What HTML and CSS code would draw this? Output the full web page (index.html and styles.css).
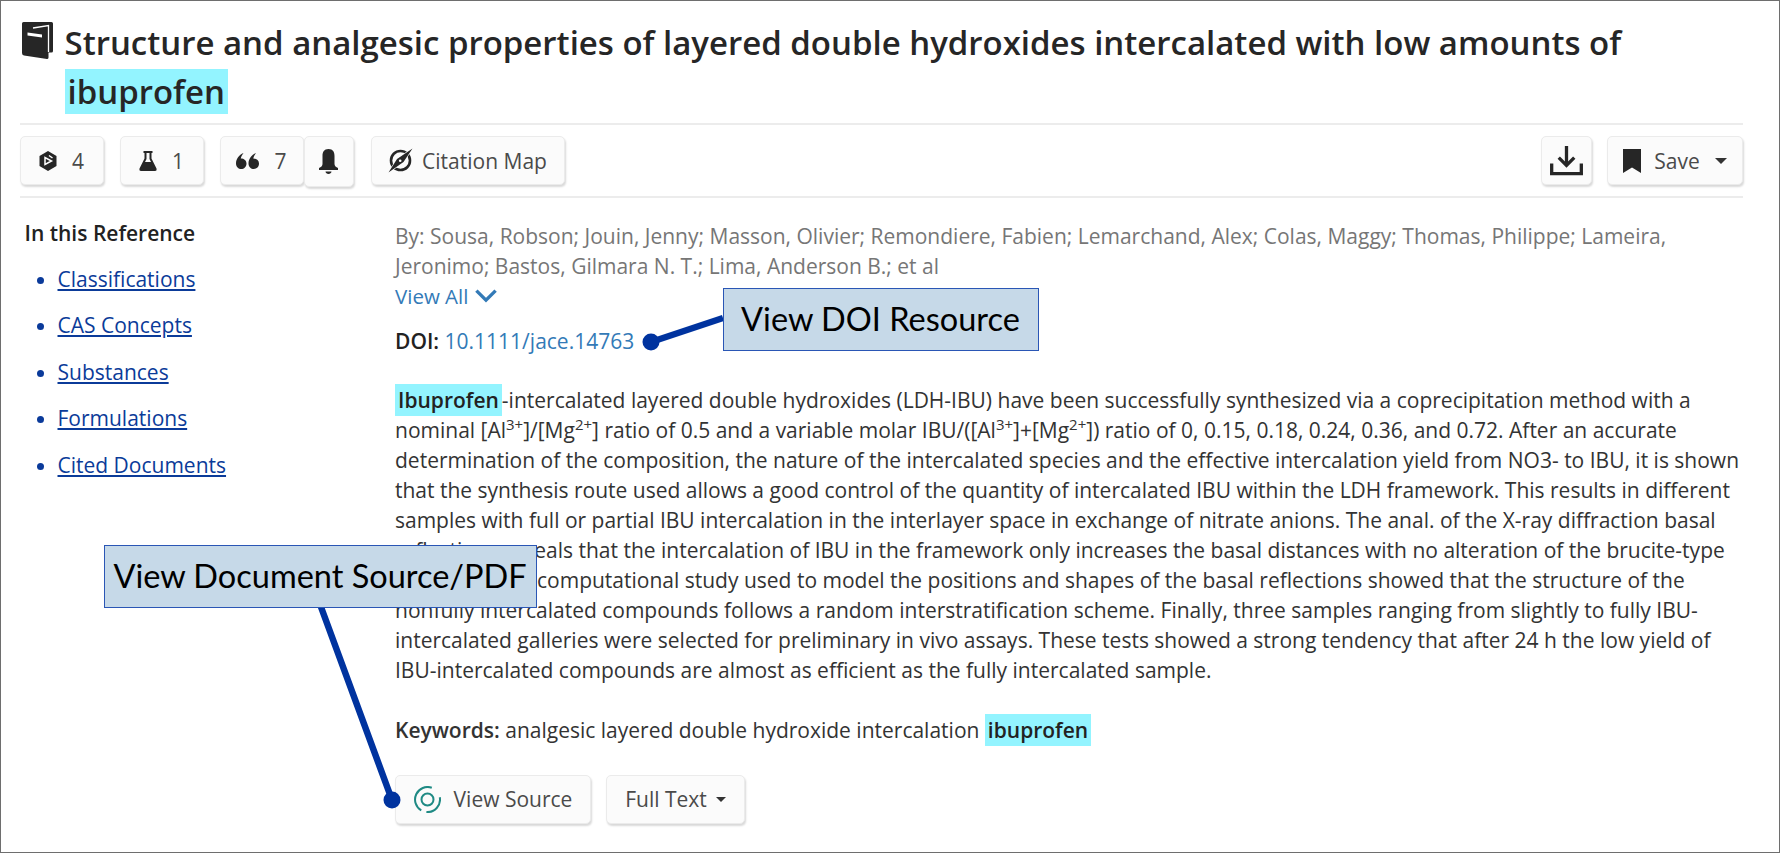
FILE: index.html
```html
<!DOCTYPE html>
<html lang="en">
<head>
<meta charset="utf-8">
<title>Reference detail</title>
<link rel="stylesheet" href="styles.css">
</head>
<body>
<div class="frame">
  <header class="title-row">
    <svg class="book" viewBox="0 0 31 37"><path d="M1.500 0 H29.500 Q31 0 31 1.500 V29 Q31 30.500 29.500 30.500 H26.500 V35.500 Q26.500 37 25 37 L2 33.500 Q0 33 0 31 V1.500 Q0 0 1.500 0 Z" fill="#262626"/><path d="M11 6 L26.500 3.500 V30" fill="none" stroke="#fff" stroke-width="1.300"/><path d="M5.500 10.500 L20 12.500 V15.500 L5.500 13.500 Z" fill="#fff"/></svg>
    <h1 class="title">Structure and analgesic properties of layered double hydroxides intercalated with low amounts of <mark class="hl hl-title">ibuprofen</mark></h1>
  </header>
  <nav class="toolbar">
    <div class="tools-left">
      <button class="btn btn-count"><svg class="ic" viewBox="0 0 18 20"><path d="M9 0 L17.500 5 V15 L9 20 L.5 15 V5 Z" fill="#262626"/><path d="M10 4.500 L13.500 7 M6 6.500 V13.500 L12.500 10 Z" fill="#262626" stroke="#fff" stroke-width="1.500"/></svg><span>4</span></button>
      <button class="btn btn-count"><svg class="ic" viewBox="0 0 18 20"><path fill-rule="evenodd" d="M4.500 0 H13.500 V2 H12.500 V7.500 L17.500 17.500 Q18 20 16 20 H2 Q0 20 .5 17.500 L5.500 7.500 V2 H4.500 Z M7.500 2 V8 L6 11 H12 L10.500 8 V2 Z" fill="#262626"/></svg><span>1</span></button>
      <div class="joined">
        <button class="btn btn-count btn-quote"><svg class="ic-q" viewBox="0 0 23 16"><path d="M7.500 0 C6 2 5.200 3.500 4.800 5.500 C8 5.500 10.500 7.500 10.500 10.500 C10.500 14 8 16 5.300 16 C2.500 16 0 14 0 10.500 C0 6 3 2 7.500 0 Z M20 0 C18.500 2 17.700 3.500 17.300 5.500 C20.500 5.500 23 7.500 23 10.500 C23 14 20.500 16 17.800 16 C15 16 12.500 14 12.500 10.500 C12.500 6 15.500 2 20 0 Z" fill="#262626"/></svg><span>7</span></button>
        <button class="btn btn-bell"><svg class="ic-bell" viewBox="0 0 19 25"><path d="M9.500 0 C14 0 15.500 3 15.500 7 V15 C15.500 17 17 18 19 19 V21 H0 V19 C2 18 3.500 17 3.500 15 V7 C3.500 3 5 0 9.500 0 Z M6.500 22.500 H12.500 C12.500 24 11 25 9.500 25 C8 25 6.500 24 6.500 22.500 Z" fill="#262626"/></svg></button>
      </div>
      <button class="btn btn-map"><svg class="ic-map" viewBox="0 0 25 25"><circle cx="12.500" cy="12.500" r="9.500" fill="none" stroke="#262626" stroke-width="2.600"/><path d="M.5 24.500 L9 11 L24.500 .5 L15.500 14 Z" fill="#262626" stroke="#fff" stroke-width="1.200" paint-order="stroke"/><circle cx="12.200" cy="12.700" r="1.300" fill="#fff"/></svg><span>Citation Map</span></button>
    </div>
    <div class="tools-right">
      <button class="btn btn-dl"><svg class="ic-dl" viewBox="0 0 34 32"><path d="M17 1 V20 M9 13 L17 21 L25 13" fill="none" stroke="#262626" stroke-width="3.400"/><path d="M1.700 19 V29.500 H32.300 V19" fill="none" stroke="#262626" stroke-width="3.400"/></svg></button>
      <button class="btn btn-save"><svg class="ic-bm" viewBox="0 0 18 24"><path d="M0 0 H18 V24 L9 18.500 L0 24 Z" fill="#262626"/></svg><span>Save</span><i class="caret"></i></button>
    </div>
  </nav>
  <div class="content">
    <aside class="side">
      <h2 class="side-head">In this Reference</h2>
      <ul class="side-list">
        <li><a href="#">Classifications</a></li>
        <li><a href="#">CAS Concepts</a></li>
        <li><a href="#">Substances</a></li>
        <li><a href="#">Formulations</a></li>
        <li><a href="#">Cited Documents</a></li>
      </ul>
    </aside>
    <main class="main">
      <p class="authors">By: Sousa, Robson; Jouin, Jenny; Masson, Olivier; Remondiere, Fabien; Lemarchand, Alex; Colas, Maggy; Thomas, Philippe; Lameira, Jeronimo; Bastos, Gilmara N. T.; Lima, Anderson B.; et al</p>
      <a class="view-all" href="#">View All <svg class="chev" viewBox="0 0 20 13"><path d="M2 2 L10 10 L18 2" fill="none" stroke="#337ab7" stroke-width="2.800"/></svg></a>
      <p class="doi"><b>DOI:</b> <a href="#">10.1111/jace.14763</a></p>
      <p class="abstract"><mark class="hl hl-b">Ibuprofen</mark>-intercalated layered double hydroxides (LDH-IBU) have been successfully synthesized via a coprecipitation method with a nominal [Al<sup>3+</sup>]/[Mg<sup>2+</sup>] ratio of 0.5 and a variable molar IBU/([Al<sup>3+</sup>]+[Mg<sup>2+</sup>]) ratio of 0, 0.15, 0.18, 0.24, 0.36, and 0.72. After an accurate determination of the composition, the nature of the intercalated species and the effective intercalation yield from NO3- to IBU, it is shown that the synthesis route used allows a good control of the quantity of intercalated IBU within the LDH framework. This results in different samples with full or partial IBU intercalation in the interlayer space in exchange of nitrate anions. The anal. of the X-ray diffraction basal reflections reveals that the intercalation of IBU in the framework only increases the basal distances with no alteration of the brucite-type <span class="covered"></span>computational study used to model the positions and shapes of the basal reflections showed that the structure of the nonfully intercalated compounds follows a random interstratification scheme. Finally, three samples ranging from slightly to fully IBU-intercalated galleries were selected for preliminary in vivo assays. These tests showed a strong tendency that after 24 h the low yield of IBU-intercalated compounds are almost as efficient as the fully intercalated sample.</p>
      <p class="keywords"><b>Keywords:</b> analgesic layered double hydroxide intercalation <mark class="hl hl-b">ibuprofen</mark></p>
      <div class="actions">
        <button class="btn btn-source"><svg class="ic-src" viewBox="0 0 27 27"><circle cx="13.500" cy="13.500" r="6" fill="none" stroke="#1f8a84" stroke-width="2"/><path d="M17.800 1.750 A12.500 12.500 0 0 0 7.250 24.300 M25.800 11.300 A12.500 12.500 0 0 1 12.400 26" fill="none" stroke="#1f8a84" stroke-width="2"/></svg><span>View Source</span></button>
        <button class="btn btn-full"><span>Full Text</span><i class="caret caret-sm"></i></button>
      </div>
    </main>
  </div>
  <svg class="leaders" viewBox="0 0 1785 853"><path d="M651 342 L723 318 M321 607 L392 800" stroke="#00339f" stroke-width="6.500" fill="none"/><circle cx="651" cy="342" r="8.500" fill="#00339f"/><circle cx="392" cy="800" r="8.500" fill="#00339f"/></svg>
  <div class="callout callout-doi">View DOI Resource</div>
  <div class="callout callout-src">View Document Source/PDF</div>
</div>
</body>
</html>
```
FILE: styles.css
```css
* { box-sizing: border-box; }
html, body { margin: 0; padding: 0; background: #fff; }
body { font-family: "Open Sans", "Liberation Sans", sans-serif; font-size: 21px; color: #333; overflow: hidden; }
.frame { position: relative; width: 1780px; height: 853px; border: 1.5px solid #6e6e6e; padding: 16px 36px 0 18.5px; overflow: hidden; }
.title-row { display: flex; align-items: flex-start; gap: 12px; padding: 5px 0 0 2px; height: 106px; }
.book { width: 31px; height: 37px; flex: none; }
.title { margin: -4px 0 0; font-size: 32.97px; font-weight: 600; line-height: 49px; color: #262626; }
.hl { background: #93f4ff; color: inherit; }
.hl-title { padding: 0 3px; }
.hl-b { font-weight: 600; padding: 2px 3px; color: #222; }
.toolbar { display: flex; justify-content: space-between; align-items: flex-start; border-top: 2px solid #ececec; border-bottom: 2px solid #ececec; padding: 11px 0 10px; height: 75px; }
.tools-left, .tools-right { display: flex; align-items: flex-start; }
.tools-right { gap: 15px; }
.btn { display: inline-flex; align-items: center; justify-content: center; height: 49px; margin: 0; padding: 0; border: 1px solid #ebebeb; border-radius: 5px; background: #fbfbfb; box-shadow: 1px 2px 2px #d9d9d9; font: inherit; font-size: 21px; color: #4a4a4a; }
.btn-count { width: 84px; gap: 15px; margin-right: 16px; }
.ic { width: 18px; height: 20px; }
.ic-q { width: 23px; height: 16px; }
.joined { display: flex; margin-right: 17px; }
.btn-quote { margin-right: 0; }
.btn-bell { width: 50px; height: 51px; }
.ic-bell { width: 19px; height: 25px; }
.btn-map { width: 194px; gap: 9px; }
.ic-map { width: 25px; height: 25px; }
.btn-dl { width: 51px; }
.ic-dl { width: 33px; height: 31px; }
.btn-save { width: 136px; gap: 13px; }
.ic-bm { width: 18px; height: 24px; }
.caret { display: inline-block; width: 0; height: 0; border-style: solid; border-color: #333 transparent transparent; border-width: 6px 6px 0; margin-left: 2px; }
.caret-sm { border-width: 5px 5px 0; margin-left: 9px; }
.content { display: flex; }
.side { width: 375.5px; flex: none; padding: 19.5px 0 0 5px; }
.side-head { margin: 0; font-size: 21px; font-weight: 600; line-height: 30px; color: #222; }
.side-list { margin: 16px 0 0; padding: 0 0 0 33px; }
.side-list li { height: 46.6px; line-height: 30px; }
.side-list li::marker { color: #0a3a9a; }
.side-list a { color: #0b3b99; }
.main { flex: 1; padding-top: 22.5px; min-width: 0; }
.authors { margin: 0; color: #767676; line-height: 30px; }
.view-all { display: block; color: #337ab7; line-height: 30px; text-decoration: none; font-size: 20.5px; }
.chev { width: 24px; height: 16px; }
.doi { margin: 15px 0 0; line-height: 30px; color: #222; }
.doi a { color: #337ab7; text-decoration: none; }
.doi b, .keywords b { font-weight: 600; }
.abstract { margin: 29px 0 0; line-height: 30px; }
.covered { display: inline-block; width: 142px; }
sup { font-size: 15px; line-height: 0; }
.keywords { margin: 30px 0 0; line-height: 30px; }
.actions { display: flex; gap: 15px; margin-top: 30px; }
.btn-source { width: 196px; gap: 13px; }
.ic-src { width: 27px; height: 27px; }
.btn-full { width: 139px; }
.leaders { position: absolute; left: -1.5px; top: -1.5px; width: 1785px; height: 853px; pointer-events: none; }
.callout { position: absolute; background: #c6d9e8; border: 1.5px solid #2a56b5; color: #000; font-family: Lato, "Liberation Sans", sans-serif; display: flex; align-items: center; justify-content: center; font-size: 32.5px; white-space: nowrap; padding-bottom: 2px; }
.callout-doi { left: 721.5px; top: 286.5px; width: 316px; height: 63px; }
.callout-src { left: 102.5px; top: 543.5px; width: 433px; height: 63px; }
```
